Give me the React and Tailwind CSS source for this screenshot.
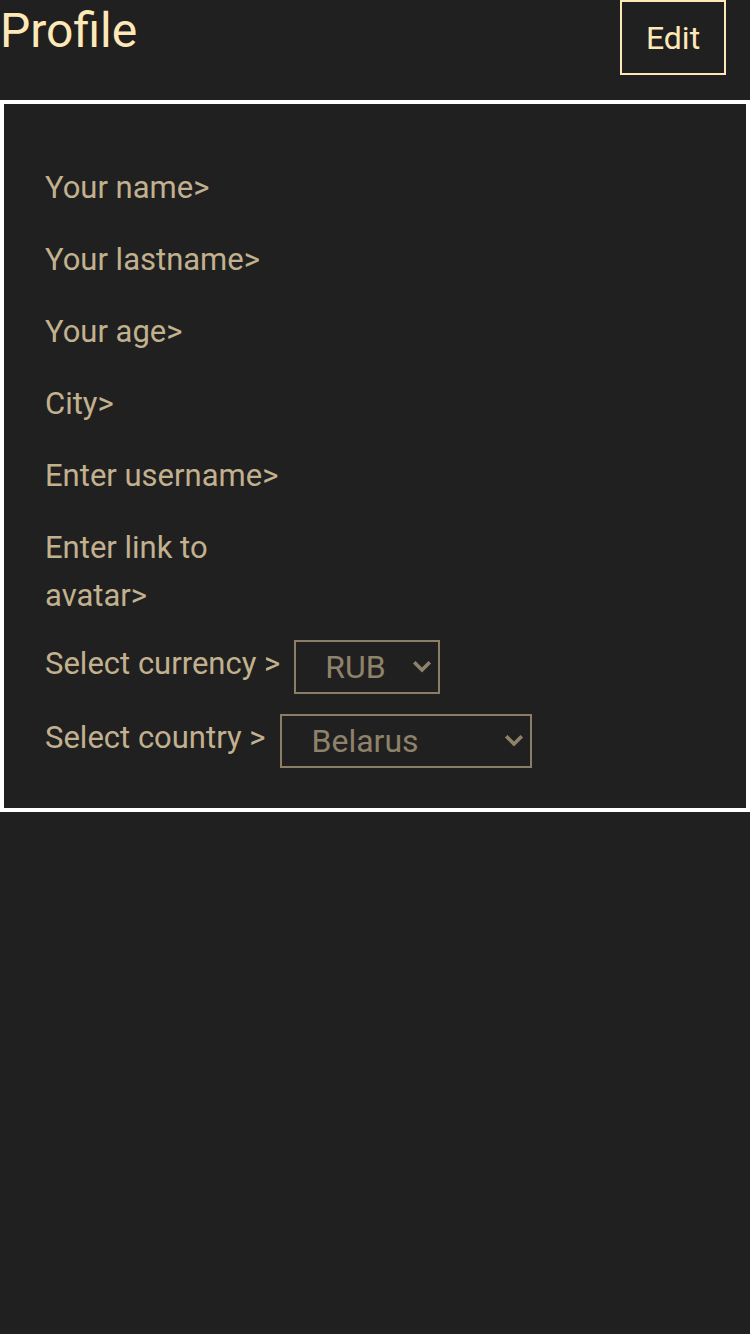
import React, { useState } from 'react';

const labels = [
    'Your name>',
    'Your lastname>',
    'Your age>',
    'City>',
    'Enter username>',
    'Enter link to avatar>',
];

const Chevron = () => (
    <svg
        className="absolute right-[8px] top-1/2 -translate-y-1/2 pointer-events-none"
        width="20"
        height="12"
        viewBox="0 0 20 12"
        fill="none"
    >
        <path d="M3.5 2.5 L10 9 L16.5 2.5" stroke="#8f826a" strokeWidth="3.6" strokeLinecap="square" />
    </svg>
);

const SelectBox = ({ value, options, onChange, width }) => (
    <div className={`relative ${width}`}>
        <select
            value={value}
            onChange={(e) => onChange(e.target.value)}
            className="appearance-none w-full h-[54px] bg-transparent border-2 border-[#8a7e66] text-[#8f826a] text-[32px] pl-[29px] pr-8 outline-none rounded-none"
        >
            {options.map((o) => (
                <option key={o} value={o} className="bg-[#202020]">
                    {o}
                </option>
            ))}
        </select>
        <Chevron />
    </div>
);

const App = () => {
    const [currency, setCurrency] = useState('RUB');
    const [country, setCountry] = useState('Belarus');

    return (
        <div className="min-h-screen bg-[#202020] font-['Roboto',sans-serif]">
            {/* Header */}
            <div className="h-[100px] flex justify-between items-start">
                <h1 className="text-[48px] leading-[56px] mt-[3px] text-[#ffe8b8]">Profile</h1>
                <button className="mr-6 w-[106px] h-[75px] border-2 border-[#ffe8b8] text-[32px] text-[#ffe8b8]">
                    Edit
                </button>
            </div>

            {/* Profile card */}
            <div className="border-4 border-white pt-[60px] pb-10 pl-[41px]">
                <div className="flex flex-col">
                    {labels.map((label, i) => (
                        <p
                            key={label}
                            className={`max-w-[250px] text-[31px] leading-[48px] text-[#c2b18f] ${i === labels.length - 1 ? 'mb-5' : 'mb-6'}`}
                        >
                            {label}
                        </p>
                    ))}

                    <div className="flex items-start">
                        <span className="text-[31px] leading-[48px] text-[#c2b18f] mr-[14px]">Select currency &gt;</span>
                        <SelectBox
                            value={currency}
                            onChange={setCurrency}
                            options={['RUB', 'USD', 'EUR']}
                            width="w-[146px]"
                        />
                    </div>

                    <div className="flex items-start mt-5">
                        <span className="text-[31px] leading-[48px] text-[#c2b18f] mr-[15px]">Select country &gt;</span>
                        <SelectBox
                            value={country}
                            onChange={setCountry}
                            options={['Belarus', 'Russia', 'Ukraine', 'Kazakhstan']}
                            width="w-[252px]"
                        />
                    </div>
                </div>
            </div>
        </div>
    );
};

export default App;
